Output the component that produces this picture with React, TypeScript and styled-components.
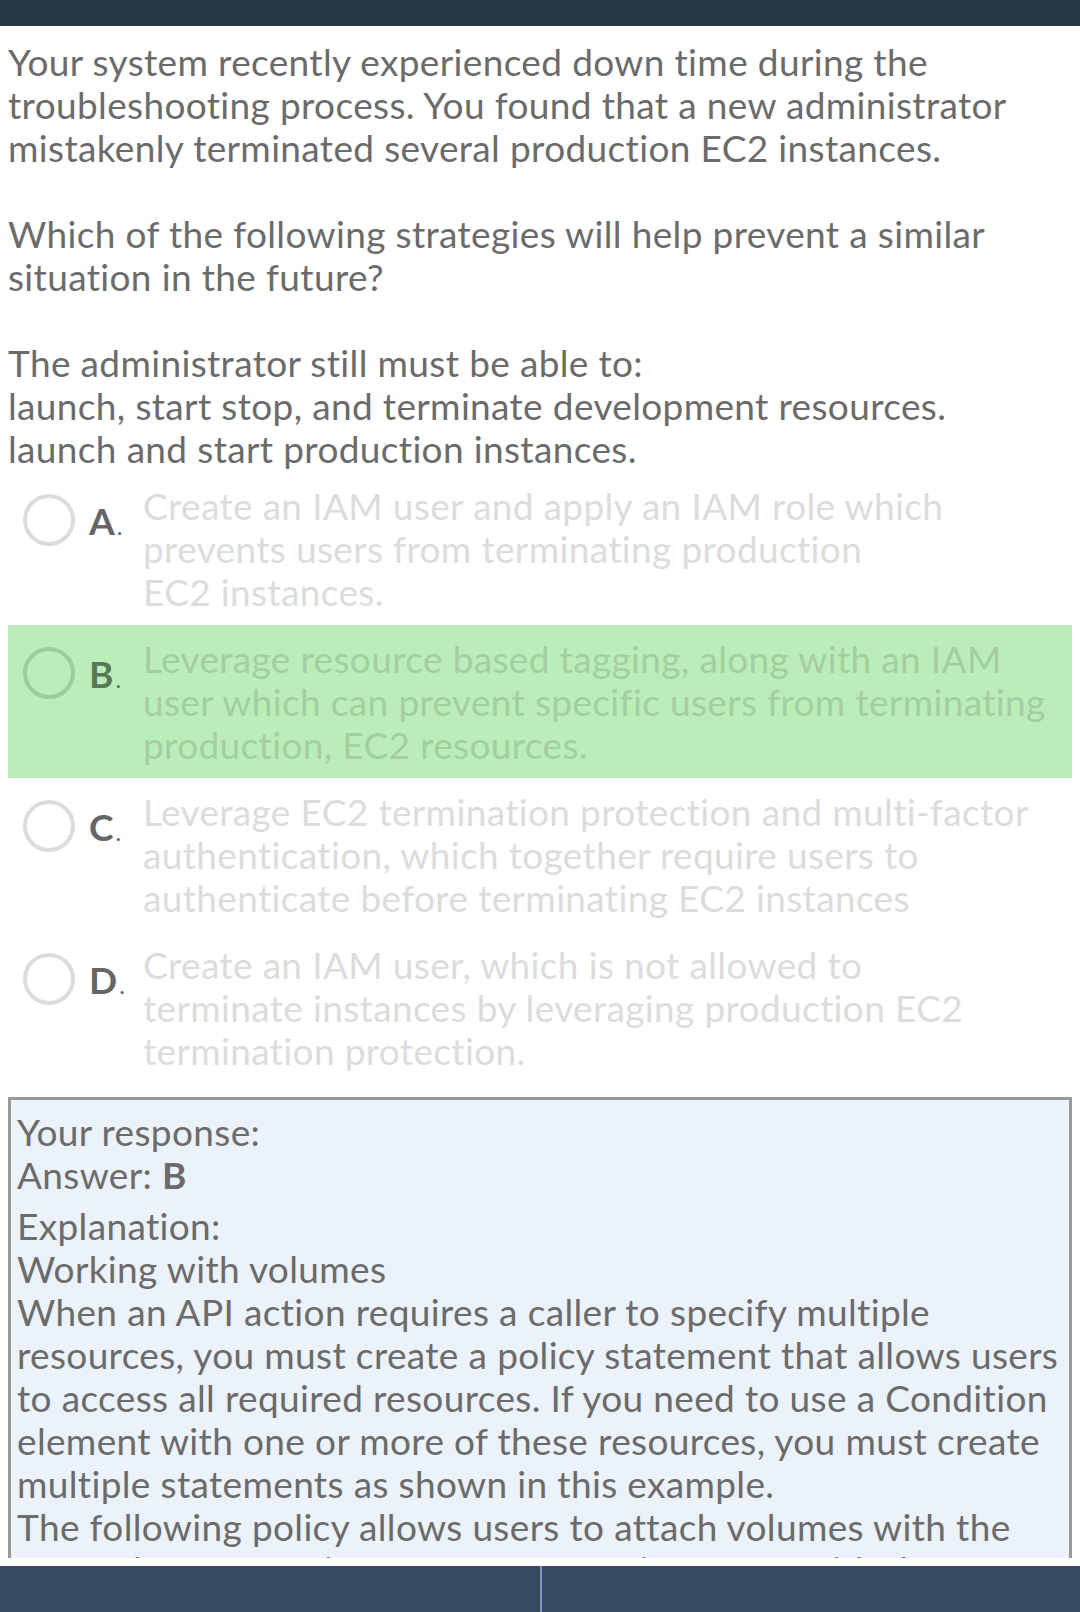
import React from "react";
import styled, { createGlobalStyle } from "styled-components";

const GlobalStyle = createGlobalStyle`
  html, body { margin: 0; padding: 0; background: #ffffff; }
  body {
    font-family: Lato, "Open Sans", sans-serif;
    font-variant-ligatures: none;
    font-feature-settings: "liga" 0, "clig" 0;
  }
`;

const Screen = styled.div`
  height: 1612px;
  display: flex;
  flex-direction: column;
  background: #ffffff;
`;

const TopBar = styled.header`
  height: 26px;
  flex: none;
  background: #283848;
`;

const Scroll = styled.main`
  flex: 1;
  min-height: 0;
  overflow: hidden;
  padding: 0 8px;
  margin-bottom: 8px;
  display: flex;
  flex-direction: column;
`;

const Text = styled.div`
  font-size: 37px;
  line-height: 43px;
  letter-spacing: 0.35px;
  font-weight: 400;
`;

const Question = styled(Text)`
  margin-top: 14px;
  color: #6b6b6b;
`;

const Para = styled.p`
  margin: 0 0 43px;
  &:last-child { margin-bottom: 0; }
`;

const Line = styled.span`
  display: block;
  white-space: nowrap;
`;

const Options = styled.div`
  margin-top: 2px;
  display: flex;
  flex-direction: column;
`;

const Option = styled.div<{ $correct?: boolean }>`
  display: flex;
  align-items: flex-start;
  padding: 12px 0;
  background: ${(p) => (p.$correct ? "#bbedb9" : "transparent")};
`;

const Radio = styled.span<{ $correct?: boolean }>`
  flex: none;
  box-sizing: border-box;
  width: 52px;
  height: 52px;
  margin: 10px 0 0 15px;
  border-radius: 50%;
  border: 4px solid ${(p) => (p.$correct ? "#9fca9d" : "#dcdcdc")};
`;

const Letter = styled.span<{ $correct?: boolean }>`
  flex: none;
  width: 40px;
  margin: 17px 14px 0 14px;
  color: ${(p) => (p.$correct ? "#587958" : "#666666")};
  font-size: 37px;
  line-height: 40px;
  font-weight: 700;
  white-space: nowrap;
  & > small {
    margin-left: 2px;
    font-size: 24px;
    font-weight: 400;
  }
`;

const OptionText = styled(Text)<{ $correct?: boolean }>`
  color: ${(p) => (p.$correct ? "#a4cea2" : "#dcdcdc")};
`;

const Explain = styled(Text).attrs({ as: "section" })`
  margin-top: 13px;
  border: 3px solid #999999;
  border-bottom: none;
  background: #ebf2fa;
  padding: 10px 6px 0;
  color: #6b6b6b;
`;

const Block = styled.div<{ $gap?: number }>`
  margin-top: ${(p) => p.$gap ?? 0}px;
`;

const BottomBar = styled.footer`
  height: 46px;
  flex: none;
  background: #364b5f;
  display: grid;
  grid-template-columns: 1fr 1fr;
`;

const BarHalf = styled.div<{ $divider?: boolean }>`
  border-left: ${(p) => (p.$divider ? "2px solid #8797c8" : "none")};
`;

const options = [
  {
    key: "A",
    lines: [
      "Create an IAM user and apply an IAM role which",
      "prevents users from terminating production",
      "EC2 instances.",
    ],
  },
  {
    key: "B",
    correct: true,
    lines: [
      "Leverage resource based tagging, along with an IAM",
      "user which can prevent specific users from terminating",
      "production, EC2 resources.",
    ],
  },
  {
    key: "C",
    lines: [
      "Leverage EC2 termination protection and multi-factor",
      "authentication, which together require users to",
      "authenticate before terminating EC2 instances",
    ],
  },
  {
    key: "D",
    lines: [
      "Create an IAM user, which is not allowed to",
      "terminate instances by leveraging production EC2",
      "termination protection.",
    ],
  },
];

const explanation = [
  "Working with volumes",
  "When an API action requires a caller to specify multiple",
  "resources, you must create a policy statement that allows users",
  "to access all required resources. If you need to use a Condition",
  "element with one or more of these resources, you must create",
  "multiple statements as shown in this example.",
  "The following policy allows users to attach volumes with the",
  "tag \"volume_user=iam-user-name\" to instances with the tag",
  "\"department=dev\", and to detach those volumes from those instances.",
];

export default function App() {
  return (
    <>
      <GlobalStyle />
      <Screen>
        <TopBar />
        <Scroll>
          <Question>
            <Para>
              <Line>Your system recently experienced down time during the</Line>
              <Line>troubleshooting process. You found that a new administrator</Line>
              <Line>mistakenly terminated several production EC2 instances.</Line>
            </Para>
            <Para>
              <Line>Which of the following strategies will help prevent a similar</Line>
              <Line>situation in the future?</Line>
            </Para>
            <Para>
              <Line>The administrator still must be able to:</Line>
              <Line>launch, start stop, and terminate development resources.</Line>
              <Line>launch and start production instances.</Line>
            </Para>
          </Question>
          <Options>
            {options.map((o) => (
              <Option key={o.key} $correct={o.correct}>
                <Radio $correct={o.correct} />
                <Letter $correct={o.correct}>
                  {o.key}
                  <small>.</small>
                </Letter>
                <OptionText $correct={o.correct}>
                  {o.lines.map((l) => (
                    <Line key={l}>{l}</Line>
                  ))}
                </OptionText>
              </Option>
            ))}
          </Options>
          <Explain>
            <Line>Your response:</Line>
            <Line>
              Answer: <b>B</b>
            </Line>
            <Block $gap={8}>
              <Line>Explanation:</Line>
              {explanation.map((l) => (
                <Line key={l}>{l}</Line>
              ))}
            </Block>
          </Explain>
        </Scroll>
        <BottomBar>
          <BarHalf />
          <BarHalf $divider />
        </BottomBar>
      </Screen>
    </>
  );
}
